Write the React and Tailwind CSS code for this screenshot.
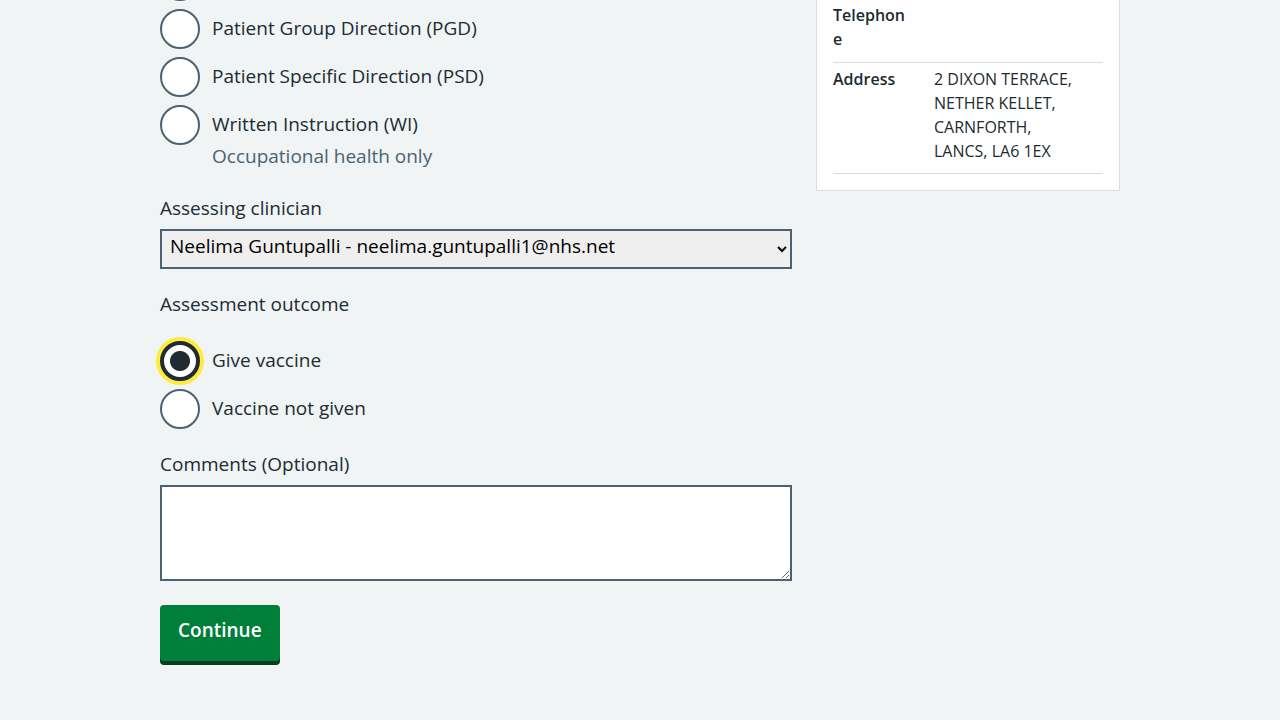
import { useState } from "react";

const radioClass =
  "h-10 w-10 shrink-0 cursor-pointer appearance-none rounded-full border-2 border-[#4c6272] bg-white outline-none checked:border-4 checked:border-[#212b32] checked:bg-[radial-gradient(circle,#212b32_9.5px,#fff_10.5px)] checked:ring-4 checked:ring-[#ffeb3b]";

function Radio({ id, name, label, ariaLabel, hint, checked, onChange }) {
  return (
    <div>
      <div className="flex gap-3">
        <input
          type="radio"
          id={id}
          name={name}
          checked={checked}
          onChange={onChange}
          aria-label={ariaLabel}
          aria-describedby={hint ? `${id}-hint` : undefined}
          className={radioClass}
        />
        {label && (
          <label htmlFor={id} className="cursor-pointer pt-1 leading-[30px]">
            {label}
          </label>
        )}
      </div>
      {hint && (
        <p id={`${id}-hint`} className="-mt-1 ml-[52px] pb-0.5 leading-[30px] text-[#4c6272]">
          {hint}
        </p>
      )}
    </div>
  );
}

const legalMechanisms = [
  { id: "protocol", ariaLabel: "National Protocol" },
  { id: "pgd", label: "Patient Group Direction (PGD)" },
  { id: "psd", label: "Patient Specific Direction (PSD)" },
  { id: "wi", label: "Written Instruction (WI)", hint: "Occupational health only" },
];

const outcomes = [
  { id: "give", label: "Give vaccine" },
  { id: "not-given", label: "Vaccine not given" },
];

export default function App() {
  const [mechanism, setMechanism] = useState("");
  const [outcome, setOutcome] = useState("give");

  return (
    <div className="min-h-screen overflow-hidden bg-[#f0f4f5] font-['Open_Sans','Noto_Sans',sans-serif] text-[19px] text-[#212b32]">
      <main className="mx-auto max-w-[984px] pb-14">
        <div className="flex items-start">
          <form className="-mt-[39px] w-2/3 px-3" onSubmit={(e) => e.preventDefault()}>
            <fieldset className="flex flex-col gap-2" aria-label="Legal mechanism">
              {legalMechanisms.map((m) => (
                <Radio
                  key={m.id}
                  {...m}
                  name="mechanism"
                  checked={mechanism === m.id}
                  onChange={() => setMechanism(m.id)}
                />
              ))}
            </fieldset>

            <div className="mt-5">
              <label htmlFor="clinician" className="mb-1.5 block leading-[30px]">
                Assessing clinician
              </label>
              <select
                id="clinician"
                className="block h-10 w-full border-2 border-[#4c6272] bg-[#efefef] px-1 pb-1.5 text-black"
              >
                <option>Neelima Guntupalli - neelima.guntupalli1@nhs.net</option>
              </select>
            </div>

            <fieldset className="mt-5">
              <legend className="mb-[22px] leading-[30px]">Assessment outcome</legend>
              <div className="flex flex-col gap-2">
                {outcomes.map((o) => (
                  <Radio
                    key={o.id}
                    {...o}
                    name="outcome"
                    checked={outcome === o.id}
                    onChange={() => setOutcome(o.id)}
                  />
                ))}
              </div>
            </fieldset>

            <div className="mt-5">
              <label htmlFor="comments" className="mb-1.5 block leading-[30px]">
                Comments (Optional)
              </label>
              <textarea
                id="comments"
                className="block h-24 w-full resize-y border-2 border-[#4c6272] bg-white p-1"
              />
            </div>

            <button
              type="submit"
              className="mt-6 block rounded-[4px] bg-[#007f3b] px-[18px] pt-2.5 pb-4 leading-[30px] font-semibold text-white shadow-[0_4px_0_#00401e]"
            >
              Continue
            </button>
          </form>

          <aside className="w-1/3 px-3">
            <div className="border border-t-0 border-[#d8dde0] bg-white px-4 pb-4 text-base leading-6">
              <dl>
                <div className="flex border-b border-[#d8dde0] pt-[3px] pb-[11px]">
                  <dt className="w-[101px] pr-7 font-semibold break-all">Telephone</dt>
                  <dd />
                </div>
                <div className="flex border-b border-[#d8dde0] pt-1 pb-[10px]">
                  <dt className="w-[101px] shrink-0 font-semibold">Address</dt>
                  <dd>
                    2 DIXON TERRACE,
                    <br />
                    NETHER KELLET,
                    <br />
                    CARNFORTH,
                    <br />
                    LANCS, LA6 1EX
                  </dd>
                </div>
              </dl>
            </div>
          </aside>
        </div>
      </main>
    </div>
  );
}
